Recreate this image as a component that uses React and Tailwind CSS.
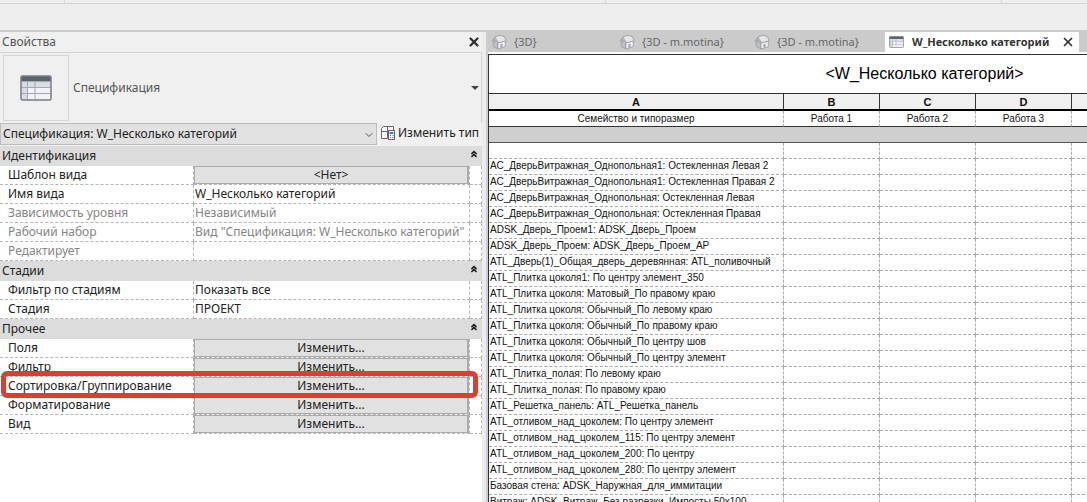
import React, { useState } from 'react';
import { ChevronDown, ChevronsUp, X } from 'lucide-react';

const groups = [
    {
        title: 'Идентификация',
        rows: [
            { label: 'Шаблон вида', type: 'button', value: '<Нет>' },
            { label: 'Имя вида', type: 'input', value: 'W_Несколько категорий' },
            { label: 'Зависимость уровня', type: 'readonly', value: 'Независимый' },
            { label: 'Рабочий набор', type: 'readonly', value: 'Вид "Спецификация: W_Несколько категорий"' },
            { label: 'Редактирует', type: 'readonly', value: '' },
        ],
    },
    {
        title: 'Стадии',
        rows: [
            { label: 'Фильтр по стадиям', type: 'input', value: 'Показать все' },
            { label: 'Стадия', type: 'input', value: 'ПРОЕКТ' },
        ],
    },
    {
        title: 'Прочее',
        rows: [
            { label: 'Поля', type: 'button', value: 'Изменить...' },
            { label: 'Фильтр', type: 'button', value: 'Изменить...' },
            { label: 'Сортировка/Группирование', type: 'button', value: 'Изменить...' },
            { label: 'Форматирование', type: 'button', value: 'Изменить...' },
            { label: 'Вид', type: 'button', value: 'Изменить...' },
        ],
    },
];

const families = [
    'АС_ДверьВитражная_Однопольная1: Остекленная Левая 2',
    'АС_ДверьВитражная_Однопольная1: Остекленная Правая 2',
    'АС_ДверьВитражная_Однопольная: Остекленная Левая',
    'АС_ДверьВитражная_Однопольная: Остекленная Правая',
    'ADSK_Дверь_Проем1: ADSK_Дверь_Проем',
    'ADSK_Дверь_Проем: ADSK_Дверь_Проем_АР',
    'ATL_Дверь(1)_Общая_дверь_деревянная: ATL_поливочный',
    'ATL_Плитка цоколя1: По центру элемент_350',
    'ATL_Плитка цоколя: Матовый_По правому краю',
    'ATL_Плитка цоколя: Обычный_По левому краю',
    'ATL_Плитка цоколя: Обычный_По правому краю',
    'ATL_Плитка цоколя: Обычный_По центру шов',
    'ATL_Плитка цоколя: Обычный_По центру элемент',
    'ATL_Плитка_полая: По левому краю',
    'ATL_Плитка_полая: По правому краю',
    'ATL_Решетка_панель: ATL_Решетка_панель',
    'ATL_отливом_над_цоколем: По центру элемент',
    'ATL_отливом_над_цоколем_115: По центру элемент',
    'ATL_отливом_над_цоколем_200: По центру',
    'ATL_отливом_над_цоколем_280: По центру элемент',
    'Базовая стена: ADSK_Наружная_для_иммитации',
    'Витраж: ADSK_Витраж_Без разрезки_Импосты 50х100',
];

const ScheduleIcon = ({ className }) => (
    <svg viewBox="0 0 32 26" className={className} aria-hidden="true">
        <rect x="1" y="1" width="30" height="24" rx="1.5" fill="#f2f3f6" />
        <path d="M1.5 7h29v5h-29zM1.5 7h6v17h-6z" fill="#d9dce3" />
        <path d="M1.5 12.5h29M1.5 18.5h29M7.5 7v17.5M15 7v17.5" stroke="#a3a7af" strokeWidth="1" />
        <path d="M1 2.5Q1 1 2.5 1h27Q31 1 31 2.5V6.5H1z" fill="#5c6470" />
        <rect x="1" y="1" width="30" height="24" rx="1.5" fill="none" stroke="#777b83" strokeWidth="1.5" />
    </svg>
);

const HouseIcon = () => (
    <svg viewBox="0 0 16 16" className="size-4 shrink-0" aria-hidden="true">
        <path d="M2.2 7.5 7 8.5V15L2.2 12.500z" fill="#bfc1c5" stroke="#999ca2" strokeWidth=".8" />
        <path d="M7 8.500 14.300 7V12.600L7 15z" fill="#f0f0f1" stroke="#999ca2" strokeWidth=".8" />
        <path d="M1 7.200 4 2.800 9 1.200 13.500 2.800 15.200 6.800 7.200 8.800 5.600 5.600 2 8.400z" fill="#e6e7e9" stroke="#999ca2" strokeWidth=".9" strokeLinejoin="round" />
        <path d="M1 7.200 4 2.800 5.600 4.600 2 8.400z" fill="#a9acb2" />
        <path d="M9.400 10 11.600 9.400V13.400L9.400 14.100z" fill="#a9acb2" />
    </svg>
);

const EditTypeIcon = () => (
    <svg viewBox="0 0 14 14" className="size-[14px] shrink-0" aria-hidden="true">
        <g fill="#f7f7f7" stroke="#62666d" strokeWidth="1">
            <path d="M2.5.5h4v5h-6v-3zM6.500.5h6v5h-6zM.5 5.500h6v7h-6z" />
            <rect x="7.5" y="4.5" width="6" height="9" />
        </g>
        <path d="M8.500 6h4v2h-4z" fill="#4a7ab8" />
        <path d="M9 9.5h1M11.5 9.5h1M9 11.5h1M11.5 11.5h1" stroke="#4a6d9c" strokeWidth="1" />
    </svg>
);

const PropertyRow = ({ row, id }) => {
    const readonly = row.type === 'readonly';
    return (
        <tr className={`h-[19px] ${readonly ? 'text-[#858585]' : 'text-[#222]'}`}>
            <th scope="row" className="border-r border-b border-dashed border-[#b5b5b5] p-0 pl-2 text-left font-normal">
                <label htmlFor={id} className="block leading-4">{row.label}</label>
            </th>
            <td className="border-r border-b border-dashed border-[#b5b5b5] p-0">
                {row.type === 'button' && (
                    <button
                        id={id}
                        className="block h-[18px] w-full border border-r-2 border-[#ababab] bg-[#e1e1e1] leading-4 hover:bg-[#e8f1fa]"
                    >
                        {row.value}
                    </button>
                )}
                {row.type === 'input' && (
                    <input id={id} defaultValue={row.value} className="block h-[18px] w-full px-px pb-0.5 leading-4 outline-none" />
                )}
                {readonly && (
                    <output id={id} className="block px-px leading-4 whitespace-nowrap">{row.value}</output>
                )}
            </td>
            <td className="border-r border-b border-dashed border-[#b5b5b5] p-0"></td>
        </tr>
    );
};

const PropertiesPanel = () => (
    <section className="flex w-[482px] shrink-0 flex-col bg-white">
        <header className="flex h-5 shrink-0 items-center justify-between bg-[#f0f0f0] pr-px pl-0.5">
            <h2 className="text-[#555]">Свойства</h2>
            <button aria-label="Закрыть свойства">
                <X className="size-[14px] text-[#333]" strokeWidth={4} />
            </button>
        </header>

        <div className="flex h-[71px] shrink-0 items-center border-t border-r border-[#d4d4d4] bg-[#f0f0f0] pr-0.5 pl-[3px]">
            <div className="flex size-[66px] items-center justify-center border border-[#d4d4d4]">
                <ScheduleIcon className="h-[26px] w-8" />
            </div>
            <span className="ml-1 flex-1 text-[#555]">Спецификация</span>
            <button aria-label="Выбор типоразмера">
                <svg viewBox="0 0 8 4" className="h-1 w-2" aria-hidden="true"><path d="M0 0h8L4 4z" fill="#444" /></svg>
            </button>
        </div>

        <div className="flex h-[23px] shrink-0 items-start bg-[#f0f0f0]">
            <div className="relative w-[377px]">
                <select
                    aria-label="Экземпляр"
                    className="block h-[22px] w-full appearance-none border border-[#bcbcbc] bg-[#e1e1e1] pl-0.5 text-[#222]"
                >
                    <option>Спецификация: W_Несколько категорий</option>
                </select>
                <ChevronDown className="pointer-events-none absolute top-1.5 right-0.5 size-3 text-[#555]" />
            </div>
            <button className="ml-1 flex h-5 items-center gap-[3px] text-[#222]">
                <EditTypeIcon />
                Изменить тип
            </button>
        </div>

        <div className="relative">
            <table className="w-full table-fixed border-separate border-spacing-0">
                <colgroup>
                    <col className="w-[194px]" />
                    <col />
                    <col className="w-3" />
                </colgroup>
                {groups.map((group, g) => (
                    <tbody key={group.title}>
                        <tr className="h-5 bg-[#dcdcdc]">
                            <th colSpan={3} className="p-0 pr-[3px] pl-0.5 font-normal text-[#222]">
                                <button className="flex w-full items-center justify-between leading-4">
                                    {group.title}
                                    <ChevronsUp className="mb-1 size-[10px]" strokeWidth={4} />
                                </button>
                            </th>
                        </tr>
                        {group.rows.map((row, r) => (
                            <PropertyRow key={row.label} row={row} id={`prop-${g}-${r}`} />
                        ))}
                    </tbody>
                ))}
            </table>
            {/* Callout around the sorting / grouping row */}
            <div className="pointer-events-none absolute right-1 bottom-9 left-px h-[27px] rounded-md border-5 border-[#e03c31]"></div>
        </div>
    </section>
);

const views = [
    { id: 1, name: '{3D}', width: 'w-[128px]' },
    { id: 2, name: '{3D - m.motina}', width: 'w-[135px]' },
    { id: 3, name: '{3D - m.motina}', width: 'w-[134px]' },
];

const ViewTabs = () => (
    <nav className="flex h-5 shrink-0 bg-[#cbcbcb] text-[11px] text-[#666]">
        {views.map((view) => (
            <button key={view.id} className={`flex shrink-0 items-center gap-[7px] pl-[3px] ${view.width}`}>
                <HouseIcon />
                {view.name}
            </button>
        ))}
        <div className="flex w-[194px] shrink-0 items-center justify-between bg-white px-1 text-[#333]">
            <button className="flex items-center gap-2 font-bold">
                <ScheduleIcon className="h-3 w-[15px]" />
                W_Несколько категорий
            </button>
            <button aria-label="Закрыть вид">
                <X className="size-[14px]" strokeWidth={3} />
            </button>
        </div>
    </nav>
);

const emptyCells = [1, 2, 3, 4, 5, 6];

const Schedule = () => {
    const [selected, setSelected] = useState(null);
    const letters = ['A', 'B', 'C', 'D', '', '', ''];
    const fields = ['Семейство и типоразмер', 'Работа 1', 'Работа 2', 'Работа 3', '', '', ''];

    return (
        <div className="min-h-0 flex-1 overflow-hidden pt-0.5">
            <table className="w-[872px] table-fixed border-separate border-spacing-0 border-l border-[#333] font-['Liberation_Sans',sans-serif] text-[10px] leading-[14px] text-[#111]">
                <colgroup>
                    <col className="w-[295px]" />
                    {emptyCells.map((c) => <col key={c} className="w-[96px]" />)}
                </colgroup>
                <thead>
                    <tr className="h-10">
                        <th colSpan={7} className="border-y border-[#333] p-0 text-base font-normal text-black">
                            &lt;W_Несколько категорий&gt;
                        </th>
                    </tr>
                    <tr className="h-[17px] bg-[#f0f0f0] text-[11px]">
                        {letters.map((letter, i) => (
                            <td key={i} className="border-r border-b-2 border-r-[#333] border-b-black p-0 text-center font-bold">{letter}</td>
                        ))}
                    </tr>
                    <tr className="h-4">
                        {fields.map((field, i) => (
                            <th key={i} className="border-r border-b border-r-[#aaa] border-b-[#333] p-0 font-normal [border-right-style:dashed]">{field}</th>
                        ))}
                    </tr>
                    <tr className="h-4">
                        <td colSpan={7} className="border-b border-[#555] bg-[#cfcfcf] p-0"></td>
                    </tr>
                </thead>
                <tbody>
                    {['', ...families].map((name, i) => (
                        <tr key={i} onClick={() => setSelected(i)} className={`h-4 ${selected === i ? 'bg-[#dceafb]' : ''}`}>
                            <td className="border-r border-b border-dashed border-[#aaa] p-0 pl-px align-top whitespace-nowrap">{name}</td>
                            {emptyCells.map((c) => (
                                <td key={c} className="border-r border-b border-dashed border-[#aaa] p-0"></td>
                            ))}
                        </tr>
                    ))}
                </tbody>
            </table>
        </div>
    );
};

export default function App() {
    return (
        <div className="flex h-screen flex-col overflow-hidden bg-[#eeeeee] font-['Noto_Sans',sans-serif] text-xs">
            {/* Bottom edge of the ribbon */}
            <div className="flex h-1 shrink-0 border-b border-[#d2d2d2]">
                <div className="w-[65px] border-r border-[#d8d8d8]"></div>
                <div className="w-[541px] border-r border-[#d8d8d8]"></div>
                <div className="w-[396px] border-r border-[#d8d8d8]"></div>
            </div>
            <div className="h-7 shrink-0 border-b-2 border-[#cbcbcb]"></div>

            <main className="flex min-h-0 flex-1">
                <PropertiesPanel />
                <div className="w-1.5 shrink-0 border-r-2 border-[#cfcfcf] bg-[#ececec]"></div>
                <section className="flex min-w-0 flex-1 flex-col bg-white">
                    <ViewTabs />
                    <Schedule />
                </section>
            </main>
        </div>
    );
}
